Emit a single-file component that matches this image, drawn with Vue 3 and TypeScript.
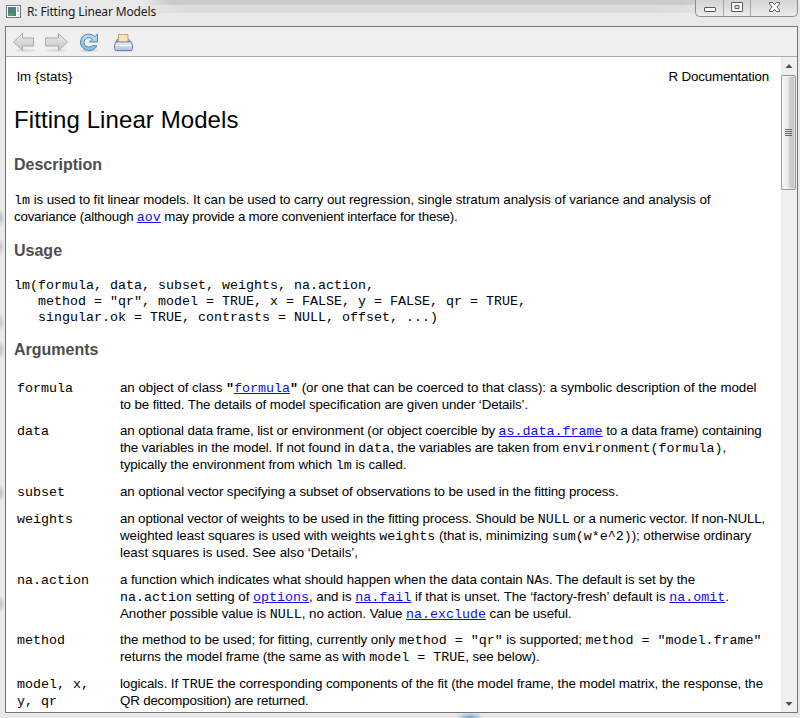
<script setup lang="ts">
interface Part {
  kind: 'text' | 'code' | 'bold' | 'link'
  value: string
}
interface Line {
  width: number
  text: string
}
interface Argument {
  names: string[]
  lines: Line[]
}

const kinds: Record<string, Part['kind']> = { '`': 'code', '[': 'link', '~': 'bold' }

// `code` marks monospaced text, ~code~ its bold form, [name] a link to another help topic.
function parse(text: string): Part[] {
  return text
    .split(/(`[^`]+`|~[^~]+~|\[[^\]]+\])/)
    .filter((s) => s.length > 0)
    .map((s): Part => {
      const kind = kinds[s[0]]
      return kind ? { kind, value: s.slice(1, -1) } : { kind: 'text', value: s }
    })
}

// Distributes letter spacing over the proportional text so a line fills its set width.
const vFit = {
  mounted(el: HTMLElement, binding: { value: number }) {
    const natural = el.getBoundingClientRect().width
    let mono = 0
    el.querySelectorAll('.mono').forEach((m) => (mono += (m.textContent ?? '').length))
    const count = (el.textContent ?? '').length - mono
    if (count > 0) el.style.letterSpacing = `${(binding.value - natural) / count}px`
  },
}

const description: Line[] = [
  { width: 696.5, text: '`lm` is used to fit linear models. It can be used to carry out regression, single stratum analysis of variance and analysis of' },
  { width: 443.5, text: 'covariance (although [aov] may provide a more convenient interface for these).' },
]

const usage = `lm(formula, data, subset, weights, na.action,
   method = "qr", model = TRUE, x = FALSE, y = FALSE, qr = TRUE,
   singular.ok = TRUE, contrasts = NULL, offset, ...)`

const args: Argument[] = [
  {
    names: ['formula'],
    lines: [
      { width: 636.5, text: 'an object of class ~"~[formula]~"~ (or one that can be coerced to that class): a symbolic description of the model' },
      { width: 408, text: 'to be fitted. The details of model specification are given under ‘Details’.' },
    ],
  },
  {
    names: ['data'],
    lines: [
      { width: 641.5, text: 'an optional data frame, list or environment (or object coercible by [as.data.frame] to a data frame) containing' },
      { width: 606, text: 'the variables in the model. If not found in `data`, the variables are taken from `environment(formula)`,' },
      { width: 286.5, text: 'typically the environment from which `lm` is called.' },
    ],
  },
  {
    names: ['subset'],
    lines: [{ width: 498.5, text: 'an optional vector specifying a subset of observations to be used in the fitting process.' }],
  },
  {
    names: ['weights'],
    lines: [
      { width: 645, text: 'an optional vector of weights to be used in the fitting process. Should be `NULL` or a numeric vector. If non-NULL,' },
      { width: 631, text: 'weighted least squares is used with weights `weights` (that is, minimizing `sum(w*e^2)`); otherwise ordinary' },
      { width: 238, text: 'least squares is used. See also ‘Details’,' },
    ],
  },
  {
    names: ['na.action'],
    lines: [
      { width: 575, text: 'a function which indicates what should happen when the data contain `NA`s. The default is set by the' },
      { width: 609, text: '`na.action` setting of [options], and is [na.fail] if that is unset. The ‘factory-fresh’ default is [na.omit].' },
      { width: 451.5, text: 'Another possible value is `NULL`, no action. Value [na.exclude] can be useful.' },
    ],
  },
  {
    names: ['method'],
    lines: [
      { width: 641.5, text: 'the method to be used; for fitting, currently only `method = "qr"` is supported; `method = "model.frame"`' },
      { width: 419.5, text: 'returns the model frame (the same as with `model = TRUE`, see below).' },
    ],
  },
  {
    names: ['model, x,', 'y, qr'],
    lines: [
      { width: 643, text: 'logicals. If `TRUE` the corresponding components of the fit (the model frame, the model matrix, the response, the' },
      { width: 188.5, text: 'QR decomposition) are returned.' },
    ],
  },
]
</script>

<template>
  <div class="window">
    <header class="titlebar">
      <svg class="app-icon" width="15" height="13" viewBox="0 0 15 13">
        <rect x=".5" y=".5" width="14" height="12" fill="#fafafa" stroke="#77787a" />
        <rect x="2" y="2" width="8" height="9" fill="#4b827d" />
        <path d="M2 2h4v3H2z" fill="#4c789c" />
        <path d="M2 8h5v3H2z" fill="#4d9b67" />
        <path d="M11 2h2v5h-2zM12 9h1v1h-1z" fill="#b5bbb9" />
      </svg>
      <span class="title"><span v-fit="129" class="fit">R: Fitting Linear Models</span></span>
      <div class="controls">
        <svg width="104" height="17" viewBox="0 0 104 17">
          <defs>
            <linearGradient id="btn" x1="0" y1="0" x2="0" y2="1">
              <stop offset="0" stop-color="#d2d2d2" />
              <stop offset="1" stop-color="#ececec" />
            </linearGradient>
          </defs>
          <path d="M.5-1V12.500q0 4 4 4H98.500q4 0 4-4V-1" fill="url(#btn)" stroke="#8e8e8e" />
          <path d="M28.500 0v16M55.500 0v16" stroke="#a5a5a5" />
          <rect x="9.500" y="7.500" width="11" height="4" rx=".5" fill="#fff" stroke="#5b5e68" />
          <path d="M36.500 2.500h11v9h-11zM40 5.500h4v3h-4z" fill="#fff" fill-rule="evenodd" stroke="#5b5e68" />
          <path d="M74.500 2.500h3.200l1.800 2 1.800-2h3.200v1.500l-2.600 3 2.600 3v1.500h-3.200l-1.800-2-1.800 2h-3.200v-1.500l2.600-3-2.600-3z" fill="#fff" stroke="#5b5e68" />
        </svg>
      </div>
    </header>

    <section class="frame">
      <nav class="toolbar">
        <svg width="140" height="29" viewBox="0 0 140 29">
          <defs>
            <linearGradient id="grey" x1="0" y1="0" x2="0" y2="1">
              <stop offset="0" stop-color="#ededed" />
              <stop offset="1" stop-color="#c4c4c4" />
            </linearGradient>
            <linearGradient id="blue" x1="0" y1="0" x2="0" y2="1">
              <stop offset="0" stop-color="#b9dced" />
              <stop offset="1" stop-color="#83bbe0" />
            </linearGradient>
            <linearGradient id="body" x1="0" y1="0" x2="0" y2="1">
              <stop offset="0" stop-color="#eef4fb" />
              <stop offset="1" stop-color="#a9c0df" />
            </linearGradient>
          </defs>
          <g fill="#d8d8d8">
            <ellipse cx="19" cy="23.500" rx="10" ry="1.200" />
            <ellipse cx="50" cy="23.500" rx="10" ry="1.200" />
            <ellipse cx="83" cy="23.500" rx="9" ry="1.300" />
            <ellipse cx="117" cy="24" rx="10" ry="1.200" />
          </g>
          <path d="M7.500 15 16.500 6.500v4.500h11v8h-11v4.500z" fill="url(#grey)" stroke="#a9a9a9" stroke-linejoin="round" />
          <path d="M61.500 15 52.500 6.500v4.500h-13v8h13v4.500z" fill="url(#grey)" stroke="#a9a9a9" stroke-linejoin="round" />
          <path
            d="M91.500 7v8h-8l2.700-2.800c-3.700-3.100-8.200-.6-8.200 3.300 0 4.300 5.500 6.200 8.600 2.900l4.400.6c-2 3.300-4.800 4.500-7.800 4.500-5 0-8.700-3.500-8.700-8.200 0-7.300 8.500-10.800 14.300-5.800z"
            fill="url(#blue)" stroke="#5488ad" stroke-linejoin="round"
          />
          <path d="M109.500 15l2.500-3.500h10l2.500 3.500z" fill="#a4b5ca" stroke="#6d84a5" />
          <path d="M112.500 7.500h9.500v8h-9.500z" fill="#f8e4b1" stroke="#c3a66b" />
          <path d="M110 15h15q1.500 2 1.500 4v2.500q0 2-2 2h-14q-2 0-2-2v-2.500q0-2 1.500-4z" fill="url(#body)" stroke="#6683ad" />
          <path d="M110 18.500h15" stroke="#fff" />
        </svg>
      </nav>

      <div class="viewport">
        <main class="page">
          <div class="topic">
            <span v-fit="55.5" class="fit">lm {stats}</span>
            <span v-fit="100.5" class="fit">R Documentation</span>
          </div>
          <h1><span v-fit="224.5" class="fit">Fitting Linear Models</span></h1>

          <h2>Description</h2>
          <div class="prose intro">
            <div v-for="line in description" :key="line.text" class="line">
              <span v-fit="line.width" class="fit"><template v-for="(p, i) in parse(line.text)" :key="i"><a v-if="p.kind === 'link'" class="mono link">{{ p.value }}</a><code v-else-if="p.kind !== 'text'" class="mono" :class="p.kind">{{ p.value }}</code><template v-else>{{ p.value }}</template></template></span>
            </div>
          </div>

          <h2 class="usage-head">Usage</h2>
          <pre class="usage">{{ usage }}</pre>

          <h2 class="args-head">Arguments</h2>
          <div class="args">
            <div v-for="arg in args" :key="arg.names[0]" class="arg">
              <div class="names">
                <div v-for="n in arg.names" :key="n" class="line"><code class="mono">{{ n }}</code></div>
              </div>
              <div class="prose">
                <div v-for="line in arg.lines" :key="line.text" class="line">
                  <span v-fit="line.width" class="fit"><template v-for="(p, i) in parse(line.text)" :key="i"><a v-if="p.kind === 'link'" class="mono link">{{ p.value }}</a><code v-else-if="p.kind !== 'text'" class="mono" :class="p.kind">{{ p.value }}</code><template v-else>{{ p.value }}</template></template></span>
                </div>
              </div>
            </div>
          </div>
        </main>

        <aside class="scrollbar">
          <svg class="arrow" width="16" height="18" viewBox="0 0 16 18"><path d="M4.500 11 8 7l3.500 4z" fill="#505050" /></svg>
          <div class="thumb">
            <i></i><i></i><i></i><i></i>
          </div>
          <svg class="arrow down" width="16" height="18" viewBox="0 0 16 18"><path d="M4.500 8h7L8 12z" fill="#505050" /></svg>
        </aside>
      </div>
    </section>
  </div>
</template>

<style>
body {
  margin: 0;
  overflow: hidden;
}
</style>

<style scoped>
.window {
  box-sizing: border-box;
  width: 800px;
  height: 718px;
  padding: 0 2px 5px 5px;
  display: flex;
  flex-direction: column;
  overflow: hidden;
  font-family: "Liberation Sans", Arial, sans-serif;
  font-size: 13.333px;
  color: #000;
  background:
    radial-gradient(ellipse 14px 6px at 470px 718px, #6f9fce, transparent),
    radial-gradient(ellipse 5px 9px at 0 218px, #bbb, transparent),
    radial-gradient(ellipse 5px 9px at 0 247px, #c4c4c4, transparent),
    radial-gradient(ellipse 5px 9px at 0 322px, #c4c4c4, transparent),
    radial-gradient(ellipse 5px 9px at 0 350px, #c0c0c0, transparent),
    radial-gradient(ellipse 5px 9px at 0 493px, #bbb, transparent),
    radial-gradient(ellipse 5px 9px at 0 604px, #bbb, transparent),
    linear-gradient(90deg, transparent 145px, rgba(195, 195, 195, 0.8) 170px, rgba(195, 195, 195, 0.8) 680px, transparent 790px) 0 0 / 800px 5px no-repeat,
    linear-gradient(90deg, transparent 140px, rgba(205, 205, 205, 0.5) 190px, rgba(205, 205, 205, 0.5) 650px, transparent 760px) 0 5px / 800px 8px no-repeat,
    #e9e9e9;
}
.titlebar {
  height: 26px;
  flex: none;
  display: flex;
  align-items: flex-start;
}
.app-icon {
  margin: 5px 0 0 1px;
}
.title {
  margin-left: 6px;
  font-family: "Noto Sans", "Open Sans", sans-serif;
  font-size: 12px;
  line-height: 23px;
  color: #1a1a1a;
}
.controls {
  margin: 0 -1px 0 auto;
  height: 17px;
}
.controls svg,
.toolbar svg {
  display: block;
}
.frame {
  flex: 1;
  min-height: 0;
  box-sizing: border-box;
  border: 1px solid #747474;
  display: flex;
  flex-direction: column;
  background: #fff;
}
.toolbar {
  height: 29px;
  flex: none;
  background: #f0f0f0;
  border-bottom: 1px solid #a9a9a9;
}
.viewport {
  flex: 1;
  min-height: 0;
  display: flex;
}
.page {
  flex: 1;
  min-width: 0;
  overflow: hidden;
  padding: 11px 8px 0;
}
.fit {
  display: inline-block;
  white-space: pre;
}
.topic {
  display: flex;
  justify-content: space-between;
  padding: 0 4px 0 3px;
  height: 17px;
  line-height: 17px;
}
h1 {
  margin: 20px 0 0;
  font-size: 24px;
  font-weight: 400;
  line-height: 30px;
}
h2 {
  margin: 20px 0 0;
  font-size: 16px;
  line-height: 20px;
  font-weight: 700;
  color: #4d4d4d;
}
.intro {
  margin-top: 16px;
}
.line {
  height: 17px;
  line-height: 17px;
  white-space: pre;
}
.mono {
  font-family: "Liberation Mono", "Courier New", monospace;
  font-size: 13.333px;
  line-height: 1;
  letter-spacing: 0;
}
.bold {
  font-weight: 700;
}
.link {
  color: #0d0dee;
  text-decoration: underline;
}
.usage-head {
  margin-top: 16px;
}
.usage {
  margin: 17px 0 0;
  font-family: "Liberation Mono", "Courier New", monospace;
  font-size: 13.333px;
  line-height: 16px;
}
.args-head {
  margin-top: 14px;
}
.args {
  margin-top: 18.500px;
}
.arg {
  display: grid;
  grid-template-columns: 103px 1fr;
  padding: 0 0 9.750px 3px;
}
.scrollbar {
  width: 16px;
  flex: none;
  display: flex;
  flex-direction: column;
  background: linear-gradient(90deg, #e5e5e5, #f0f0f0 3px, #f0f0f0);
}
.arrow {
  flex: none;
  display: block;
}
.thumb {
  box-sizing: border-box;
  width: 15px;
  height: 115px;
  border: 1px solid #969696;
  border-radius: 2px;
  background: linear-gradient(90deg, #f6f6f6, #ebebeb 45%, #cfcfd1 60%, #c3c3c6);
  box-shadow: inset 0 0 0 1px rgba(255, 255, 255, 0.5);
  display: flex;
  flex-direction: column;
  align-items: center;
  justify-content: center;
  gap: 1px;
}
.thumb i {
  width: 7px;
  height: 1px;
  background: #666;
}
.down {
  margin-top: auto;
}
</style>
